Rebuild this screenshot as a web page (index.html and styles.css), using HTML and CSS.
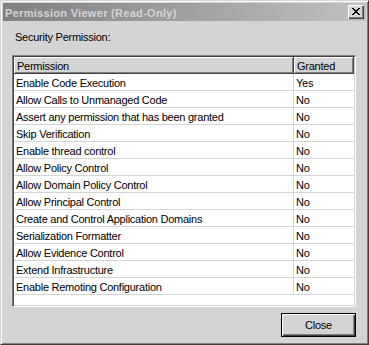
FILE: index.html
```html
<!DOCTYPE html>
<html lang="en">
<head>
  <meta charset="UTF-8" />
  <title>Permission Viewer (Read-Only)</title>
  <link rel="stylesheet" href="styles.css">
</head>
<body>
  <div class="window">
    <div class="titlebar">
      <span class="title">Permission Viewer (Read-Only)</span>
      <button class="close-btn" aria-label="Close">
        <svg width="8" height="7" viewBox="0 0 8 7" shape-rendering="crispEdges">
          <path d="M0 0h2v1h-2z M6 0h2v1h-2z M1 1h2v1h-2z M5 1h2v1h-2z M2 2h4v1h-4z M3 3h2v1h-2z M2 4h4v1h-4z M1 5h2v1h-2z M5 5h2v1h-2z M0 6h2v1h-2z M6 6h2v1h-2z" fill="#000"/>
        </svg>
      </button>
    </div>

    <div class="content">
      <div class="label">Security Permission:</div>

      <div class="list">
        <div class="list-head">
          <div class="head-cell">Permission</div>
          <div class="head-cell">Granted</div>
        </div>
        <div class="row"><div class="cell">Enable Code Execution</div><div class="cell">Yes</div></div>
        <div class="row"><div class="cell">Allow Calls to Unmanaged Code</div><div class="cell">No</div></div>
        <div class="row"><div class="cell">Assert any permission that has been granted</div><div class="cell">No</div></div>
        <div class="row"><div class="cell">Skip Verification</div><div class="cell">No</div></div>
        <div class="row"><div class="cell">Enable thread control</div><div class="cell">No</div></div>
        <div class="row"><div class="cell">Allow Policy Control</div><div class="cell">No</div></div>
        <div class="row"><div class="cell">Allow Domain Policy Control</div><div class="cell">No</div></div>
        <div class="row"><div class="cell">Allow Principal Control</div><div class="cell">No</div></div>
        <div class="row"><div class="cell">Create and Control Application Domains</div><div class="cell">No</div></div>
        <div class="row"><div class="cell">Serialization Formatter</div><div class="cell">No</div></div>
        <div class="row"><div class="cell">Allow Evidence Control</div><div class="cell">No</div></div>
        <div class="row"><div class="cell">Extend Infrastructure</div><div class="cell">No</div></div>
        <div class="row"><div class="cell">Enable Remoting Configuration</div><div class="cell">No</div></div>
      </div>

      <div class="footer">
        <button class="btn">Close</button>
      </div>
    </div>
  </div>
</body>
</html>
```

FILE: styles.css
```css
body {
  margin: 0;
  font-family: 'Liberation Sans', Arial, sans-serif;
  font-size: 11px;
  letter-spacing: -0.25px;
  color: #000;
  background: #d4d4d4;
}

.window {
  width: 369px;
  height: 345px;
  box-sizing: border-box;
  background: #d4d4d4;
  border-top: 1px solid #d4d4d4;
  border-left: 1px solid #d4d4d4;
  border-right: 1px solid #404040;
  border-bottom: 1px solid #404040;
  box-shadow: inset 1px 1px #fff, inset -1px -1px #808080;
  padding: 2px;
  display: flex;
  flex-direction: column;
}

.titlebar {
  height: 18px;
  flex-shrink: 0;
  background: linear-gradient(to right, #808080, #c0c0c0);
  display: flex;
  align-items: center;
  justify-content: space-between;
  padding: 0 2px;
}

.title {
  color: #d4d4d4;
  font-weight: bold;
  letter-spacing: 0.3px;
  line-height: 13px;
  padding-top: 2px;
}

.close-btn {
  width: 16px;
  height: 14px;
  padding: 0;
  margin: 0;
  border: none;
  background: #d4d4d4;
  box-shadow: inset 1px 1px #fff, inset -1px -1px #404040, inset -2px -2px #808080;
  display: flex;
  align-items: center;
  justify-content: center;
}

.close-btn svg {
  display: block;
  margin: 0 1px 1px 0;
}

.content {
  flex: 1;
  padding: 10px 10px 0 9px;
  display: flex;
  flex-direction: column;
}

.label {
  line-height: 13px;
  padding-left: 3px;
}

.list {
  margin-top: 11px;
  height: 252px;
  box-sizing: border-box;
  background: #fff;
  border-top: 1px solid #808080;
  border-left: 1px solid #808080;
  border-right: 1px solid #fff;
  border-bottom: 1px solid #fff;
  box-shadow: inset 1px 1px #404040, inset -1px -1px #d4d4d4;
  padding: 1px;
}

.list-head,
.row {
  display: grid;
  grid-template-columns: 280px 60px;
}

.head-cell {
  height: 17px;
  box-sizing: border-box;
  background: #d4d4d4;
  border-right: 1px solid #404040;
  border-bottom: 1px solid #404040;
  box-shadow: inset 1px 1px #fff, inset -1px -1px #808080;
  padding: 3px 0 0 3px;
  line-height: 13px;
}

.cell {
  height: 17px;
  box-sizing: border-box;
  border-bottom: 1px solid #d4d4d4;
  padding: 3px 0 0 2px;
  line-height: 13px;
  white-space: nowrap;
  overflow: hidden;
}

.row .cell:first-child {
  border-right: 1px solid #d4d4d4;
}

.footer {
  display: flex;
  justify-content: flex-end;
  margin-top: 6px;
}

.btn {
  width: 75px;
  height: 24px;
  box-sizing: border-box;
  margin: 0;
  padding: 0;
  border: 1px solid #000;
  background: #d4d4d4;
  box-shadow: inset 1px 1px #fff, inset -1px -1px #404040, inset -2px -2px #808080;
  font-family: 'Liberation Sans', Arial, sans-serif;
  font-size: 11px;
  letter-spacing: -0.25px;
  color: #000;
}
```
